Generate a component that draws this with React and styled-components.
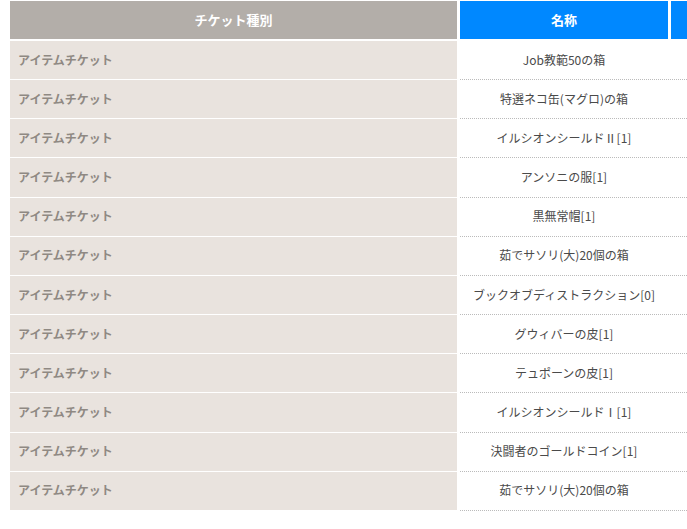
import React from "react";
import styled, { createGlobalStyle } from "styled-components";

const GlobalStyle = createGlobalStyle`
  html, body {
    margin: 0;
    padding: 0;
    background: #fff;
    overflow: hidden;
  }
  body {
    font-family: "Noto Sans CJK JP", "Noto Sans", sans-serif;
  }
`;

const Wrap = styled.div`
  padding: 1px 0 0 10px;
  width: 677px;
`;

const HeadRow = styled.div`
  display: grid;
  grid-template-columns: 447px 208px 1fr;
  column-gap: 3px;
  height: 38px;
  margin-bottom: 2px;
`;

const HeadCell = styled.div`
  display: flex;
  align-items: center;
  justify-content: center;
  padding-bottom: 2px;
  background: ${p => (p.$blue ? "#0088ff" : "#b3aea9")};
  color: #fff;
  font-size: 13px;
  font-weight: bold;
`;

const Row = styled.div`
  display: grid;
  grid-template-columns: 447px 1fr;
  column-gap: 3px;
  height: 39.17px;
`;

const TypeCell = styled.div`
  display: flex;
  align-items: center;
  padding: 0 0 2px 8px;
  background: #e9e3de;
  border-bottom: 1px solid #fff;
  color: #8f8983;
  font-size: 12px;
  font-weight: bold;
`;

const NameArea = styled.div`
  display: flex;
  align-items: center;
  padding-bottom: 2px;
  border-bottom: 1px dotted #bbb;
`;

const NameCell = styled.div`
  width: 208px;
  text-align: center;
  color: #4a4a4a;
  font-size: 12px;
`;

const items = [
  "Job教範50の箱",
  "特選ネコ缶(マグロ)の箱",
  "イルシオンシールドⅡ[1]",
  "アンソニの服[1]",
  "黒無常帽[1]",
  "茹でサソリ(大)20個の箱",
  "ブックオブディストラクション[0]",
  "グウィバーの皮[1]",
  "テュポーンの皮[1]",
  "イルシオンシールドⅠ[1]",
  "決闘者のゴールドコイン[1]",
  "茹でサソリ(大)20個の箱"
];

export default function App() {
  return (
    <>
      <GlobalStyle />
      <Wrap>
        <HeadRow>
          <HeadCell>チケット種別</HeadCell>
          <HeadCell $blue>名称</HeadCell>
          <HeadCell $blue />
        </HeadRow>
        {items.map((name, i) => (
          <Row key={i}>
            <TypeCell>アイテムチケット</TypeCell>
            <NameArea>
              <NameCell>{name}</NameCell>
            </NameArea>
          </Row>
        ))}
      </Wrap>
    </>
  );
}
